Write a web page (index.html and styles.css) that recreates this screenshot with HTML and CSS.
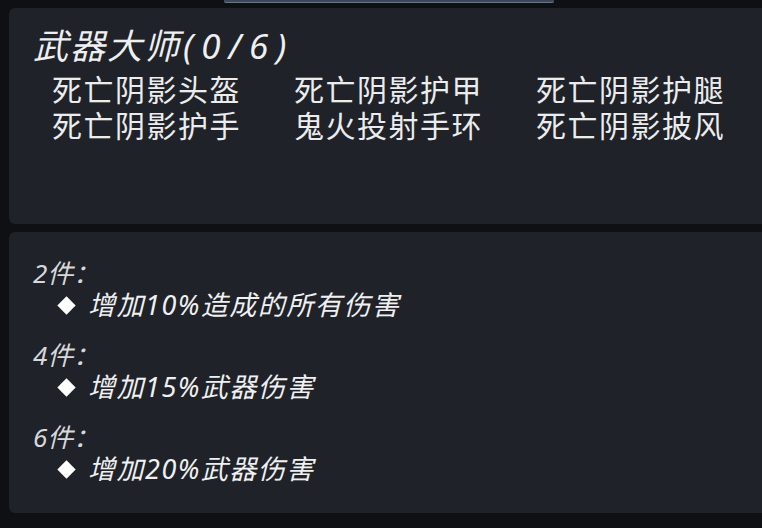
FILE: index.html
```html
<!DOCTYPE html>
<html lang="zh-CN">
<head>
<meta charset="utf-8">
<link rel="stylesheet" href="styles.css">
</head>
<body>
<div class="peek"></div>
<div class="stack">
  <section class="panel set">
    <h1 class="title">武器大师<span class="progress">(0/6)</span></h1>
    <div class="items">
      <span>死亡阴影头盔</span>
      <span>死亡阴影护甲</span>
      <span>死亡阴影护腿</span>
      <span>死亡阴影护手</span>
      <span>鬼火投射手环</span>
      <span>死亡阴影披风</span>
    </div>
  </section>
  <section class="panel bonus">
    <div class="group">
      <div class="count">2件：</div>
      <div class="effect"><i class="dia"></i><span>增加10%造成的所有伤害</span></div>
    </div>
    <div class="group">
      <div class="count">4件：</div>
      <div class="effect"><i class="dia"></i><span>增加15%武器伤害</span></div>
    </div>
    <div class="group">
      <div class="count">6件：</div>
      <div class="effect"><i class="dia"></i><span>增加20%武器伤害</span></div>
    </div>
  </section>
</div>
</body>
</html>
```

FILE: styles.css
```css
html, body {
  margin: 0;
  padding: 0;
  width: 762px;
  height: 528px;
  overflow: hidden;
  background: #0f1013;
  font-family: "Noto Sans", "Noto Sans CJK SC", sans-serif;
  color: #ececec;
  position: relative;
}

.peek {
  position: absolute;
  left: 224px;
  top: 0;
  width: 330px;
  height: 2px;
  background: #3e4756;
  border-bottom: 1px solid #6b7584;
  border-radius: 0 0 2px 2px;
}

.stack {
  display: flex;
  flex-direction: column;
  gap: 8px;
  padding: 8px 0 0 9px;
}

.panel {
  width: 770px;
  background: #1f2229;
  border-radius: 6px;
  box-sizing: border-box;
}

.set {
  height: 216px;
  padding: 16px 0 0 24px;
}

.title {
  margin: 0;
  font-size: 35px;
  line-height: 44px;
  font-weight: 400;
  font-style: italic;
  letter-spacing: 2px;
  color: #efefef;
}

.progress {
  letter-spacing: 8px;
  margin-left: 2px;
}

.items {
  margin: 5px 0 0 19px;
  display: grid;
  grid-template-columns: 242px 242px 242px;
  font-family: "Liberation Sans", "Noto Sans CJK SC", sans-serif;
  font-size: 30px;
  line-height: 36px;
  letter-spacing: 1.5px;
  color: #ececec;
}

.bonus {
  height: 281px;
  padding: 25px 0 0 24px;
  display: flex;
  flex-direction: column;
  gap: 18px;
}

.count {
  font-size: 26px;
  line-height: 32px;
  font-style: italic;
  color: #d8d8d8;
}

.effect {
  display: flex;
  align-items: center;
  padding-left: 27px;
  font-size: 27px;
  line-height: 32px;
  font-style: italic;
  letter-spacing: 1.5px;
  color: #f0f0f0;
}

.dia {
  width: 13px;
  height: 13px;
  background: #ffffff;
  transform: rotate(45deg);
  margin-right: 15px;
  flex: none;
}
```
